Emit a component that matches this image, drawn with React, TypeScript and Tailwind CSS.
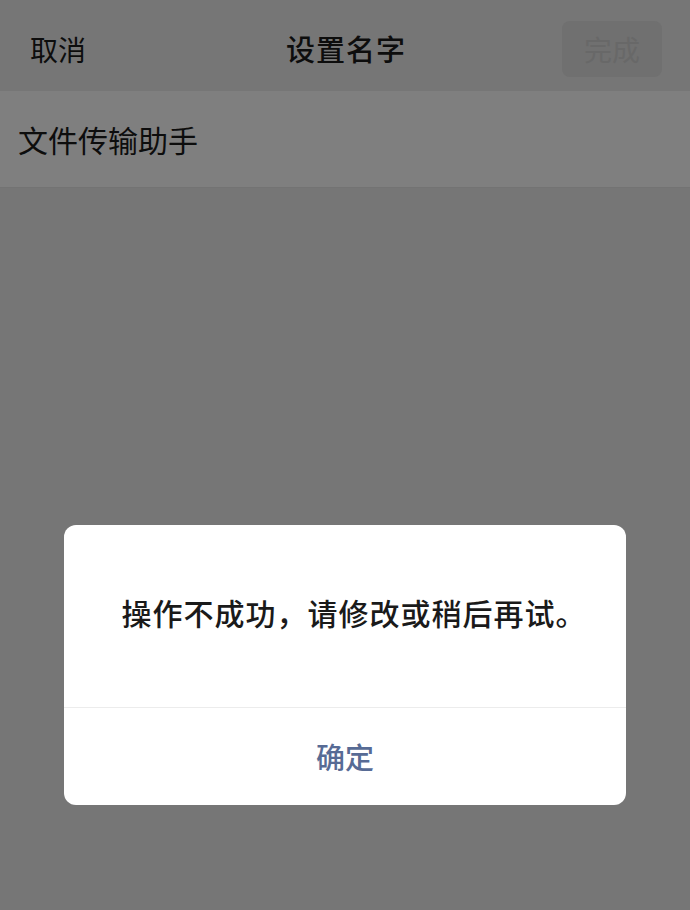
const font = { fontFamily: '"Noto Sans CJK SC", "Noto Sans", sans-serif' };

export default function App() {
  return (
    <div className="relative h-[910px] w-[690px] overflow-hidden bg-[#767676]" style={font}>
      {/* top bar */}
      <div className="flex h-[91px] items-center justify-between pl-[30px] pr-[28px] pt-[6px]">
        <span className="w-[100px] text-[28px] text-[#0d0d0d]">取消</span>
        <span className="text-[29px] font-medium tracking-[1px] text-[#0d0d0d]">设置名字</span>
        <div className="flex h-[56px] w-[100px] items-center justify-center rounded-[8px] bg-[#707070]">
          <span className="text-[28px] text-[#686868]">完成</span>
        </div>
      </div>

      {/* input row */}
      <div className="flex h-[97px] items-center border-b border-[#737373] bg-[#7f7f7f] px-[18px]">
        <span className="text-[30px] text-[#0d0d0d]">文件传输助手</span>
      </div>

      {/* dialog */}
      <div className="absolute left-[64px] top-[525px] flex h-[280px] w-[562px] flex-col rounded-[12px] bg-white">
        <div className="flex h-[182px] items-center justify-center pb-[7px] pl-[18px]">
          <span className="text-[30px] font-medium tracking-[1px] text-[#1a1a1a]">操作不成功，请修改或稍后再试。</span>
        </div>
        <div className="h-px bg-[#ececec]" />
        <div className="flex flex-1 items-center justify-center">
          <span className="text-[29px] font-medium text-[#576b95]">确定</span>
        </div>
      </div>
    </div>
  );
}
